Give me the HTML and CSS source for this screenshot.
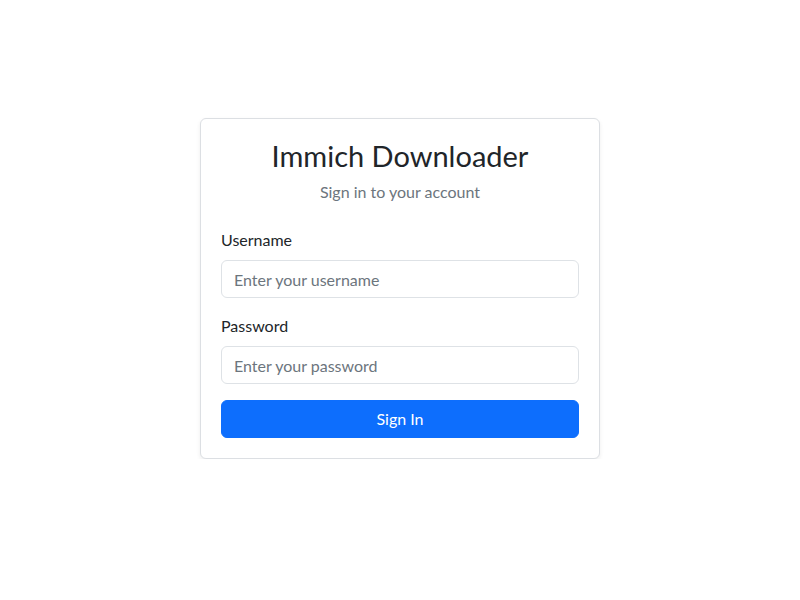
FILE: index.html
```html
<!DOCTYPE html>
<html lang="en">
<head>
<meta charset="utf-8">
<title>Immich Downloader - Login</title>
<link rel="stylesheet" href="styles.css">
</head>
<body>
<main class="page">
  <div class="card">
    <h3 class="title">Immich Downloader</h3>
    <p class="subtitle">Sign in to your account</p>
    <form class="form">
      <div class="field">
        <label class="label" for="username">Username</label>
        <input class="input" id="username" type="text" placeholder="Enter your username">
      </div>
      <div class="field">
        <label class="label" for="password">Password</label>
        <input class="input" id="password" type="password" placeholder="Enter your password">
      </div>
      <button class="btn" type="button">Sign In</button>
    </form>
  </div>
</main>
</body>
</html>
```
FILE: styles.css
```css
* { box-sizing: border-box; }
html, body { margin: 0; padding: 0; background: #fff; }
body {
  font-family: Lato, "Noto Sans", "Liberation Sans", sans-serif;
  font-size: 16px;
  line-height: 1.5;
  color: #212529;
}
.page {
  display: flex;
  flex-direction: column;
  align-items: center;
  padding-top: 118px;
}
.card {
  width: 400px;
  border: 1px solid #dcdfe3;
  border-radius: 6px;
  background: #fff;
  box-shadow: 0 .125rem .25rem rgba(0,0,0,.075);
  padding: 20px;
}
.title {
  margin: 0 0 8px;
  font-size: 29px;
  font-weight: 400;
  line-height: 33px;
  text-align: center;
}
.subtitle {
  margin: 0 0 24px;
  text-align: center;
  color: #6c757d;
}
.form { display: flex; flex-direction: column; }
.field { margin-bottom: 16px; display: flex; flex-direction: column; }
.label { margin-bottom: 8px; }
.input {
  height: 38px;
  padding: 6px 12px;
  font: inherit;
  color: #212529;
  border: 1px solid #dee2e6;
  border-radius: 6px;
  background: #fff;
}
.input::placeholder { color: #6c757d; opacity: 1; }
.btn {
  height: 38px;
  font: inherit;
  color: #fff;
  background: #0d6efd;
  border: 1px solid #0d6efd;
  border-radius: 6px;
  padding: 6px 12px;
}
```
